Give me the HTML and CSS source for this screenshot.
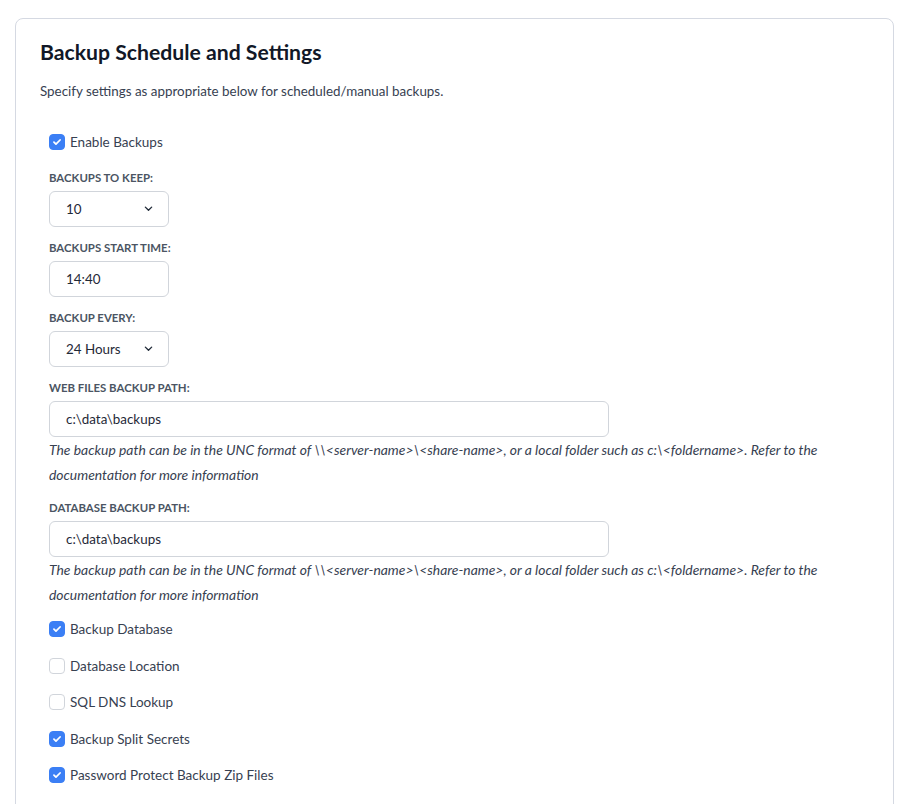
FILE: index.html
```html
<!DOCTYPE html>
<html lang="en">
<head>
<meta charset="utf-8">
<title>Backup Schedule and Settings</title>
<link rel="stylesheet" href="styles.css">
</head>
<body>
<div class="page">
  <section class="card">
    <h1 class="title">Backup Schedule and Settings</h1>
    <p class="desc">Specify settings as appropriate below for scheduled/manual backups.</p>
    <div class="form">
      <label class="check first"><span class="box on"><svg viewBox="0 0 16 16"><path d="M4.5 8.2l2.3 2.3 4.7-4.8"/></svg></span>Enable Backups</label>

      <div class="group">
        <div class="label">BACKUPS TO KEEP:</div>
        <div class="field small select"><span>10</span><svg class="chev" viewBox="0 0 10 6"><path d="M1.5 1.2l3.5 3.4 3.5-3.4"/></svg></div>
      </div>

      <div class="group">
        <div class="label">BACKUPS START TIME:</div>
        <div class="field small"><span>14:40</span></div>
      </div>

      <div class="group">
        <div class="label">BACKUP EVERY:</div>
        <div class="field small select"><span>24 Hours</span><svg class="chev" viewBox="0 0 10 6"><path d="M1.5 1.2l3.5 3.4 3.5-3.4"/></svg></div>
      </div>

      <div class="group">
        <div class="label">WEB FILES BACKUP PATH:</div>
        <div class="field wide"><span>c:\data\backups</span></div>
        <p class="help">The backup path can be in the UNC format of \\&lt;server-name&gt;\&lt;share-name&gt;, or a local folder such as c:\&lt;foldername&gt;. Refer to the documentation for more information</p>
      </div>

      <div class="group">
        <div class="label">DATABASE BACKUP PATH:</div>
        <div class="field wide"><span>c:\data\backups</span></div>
        <p class="help">The backup path can be in the UNC format of \\&lt;server-name&gt;\&lt;share-name&gt;, or a local folder such as c:\&lt;foldername&gt;. Refer to the documentation for more information</p>
      </div>

      <div class="checks">
        <label class="check"><span class="box on"><svg viewBox="0 0 16 16"><path d="M4.5 8.2l2.3 2.3 4.7-4.8"/></svg></span>Backup Database</label>
        <label class="check"><span class="box"></span>Database Location</label>
        <label class="check"><span class="box"></span>SQL DNS Lookup</label>
        <label class="check"><span class="box on"><svg viewBox="0 0 16 16"><path d="M4.5 8.2l2.3 2.3 4.7-4.8"/></svg></span>Backup Split Secrets</label>
        <label class="check"><span class="box on"><svg viewBox="0 0 16 16"><path d="M4.5 8.2l2.3 2.3 4.7-4.8"/></svg></span>Password Protect Backup Zip Files</label>
      </div>
    </div>
  </section>
</div>
</body>
</html>
```

FILE: styles.css
```css
* { box-sizing: border-box; }
html, body { margin: 0; padding: 0; background: #ffffff; }
body {
  font-family: "Lato", "Noto Sans", "Liberation Sans", sans-serif;
  color: #374151;
  font-size: 13.4px;
}
.page {
  padding: 18px 25px 0 15px;
  height: 804px;
  overflow: hidden;
}
.card {
  border: 1px solid #d5d9e2;
  border-radius: 8px;
  padding: 19px 24px 40px 24px;
  min-height: 820px;
}
.title {
  margin: 0;
  font-size: 21.2px;
  line-height: 28px;
  font-weight: 700;
  color: #111827;
}
.desc {
  margin: 15px 0 0 0;
  line-height: 20px;
  font-size: 13.4px;
  color: #374151;
}
.form {
  padding-left: 9px;
  display: flex;
  flex-direction: column;
}
.check {
  display: flex;
  align-items: center;
  gap: 5px;
  height: 20px;
  line-height: 20px;
  font-size: 13.5px;
  color: #374151;
}
.check.first { margin-top: 31px; margin-bottom: 18px; }
.box {
  width: 16px;
  height: 16px;
  border-radius: 4px;
  border: 1px solid #d1d5db;
  background: #fff;
  display: flex;
  align-items: center;
  justify-content: center;
  flex: none;
}
.box.on { background: #3b7ff5; border-color: #3b7ff5; }
.box svg { width: 16px; height: 16px; }
.box svg path { fill: none; stroke: #fff; stroke-width: 2; stroke-linecap: round; stroke-linejoin: round; }
.group { display: flex; flex-direction: column; margin-bottom: 13px; }
.label {
  font-size: 11.4px;
  line-height: 16px;
  font-weight: 700;
  color: #4b5563;
  margin-bottom: 5px;
}
.field {
  height: 36px;
  border: 1px solid #d1d5db;
  border-radius: 6px;
  display: flex;
  align-items: center;
  justify-content: space-between;
  padding: 0 15px 0 16px;
  font-size: 13.4px;
  color: #1f2937;
  background: #fff;
}
.field.small { width: 120px; }
.field.wide { width: 560px; }
.chev { width: 9px; height: 5.5px; }
.chev path { fill: none; stroke: #1f2937; stroke-width: 1.5; stroke-linecap: round; stroke-linejoin: round; }
.help {
  margin: 0;
  font-style: italic;
  line-height: 25px;
  font-size: 13.9px;
  color: #374151;
}
.checks { display: flex; flex-direction: column; gap: 16.5px; margin-top: -1px; }
```
